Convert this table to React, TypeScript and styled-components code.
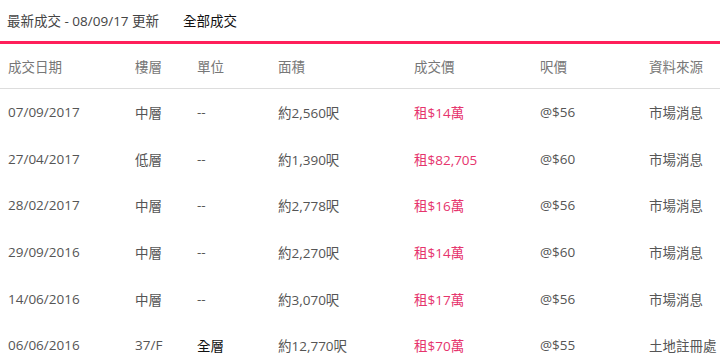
import React from "react";
import styled, { createGlobalStyle } from "styled-components";

const GlobalStyle = createGlobalStyle`
  html, body {
    margin: 0;
    padding: 0;
    background: #fff;
  }
  body {
    font-family: "Open Sans", "Noto Sans CJK TC", sans-serif;
    font-size: 13.5px;
    color: #444;
  }
`;

const Page = styled.div`
  width: 720px;
  height: 360px;
  overflow: hidden;
`;

const TabBar = styled.div`
  display: flex;
  align-items: center;
  height: 41px;
  padding-left: 7px;
  gap: 24px;
  border-bottom: 3px solid #ff1f5a;
`;

const Tab = styled.div<{ $active?: boolean }>`
  color: ${({ $active }) => ($active ? "#111" : "#444")};
  margin-top: -2px;
`;

const COLS = "127px 62px 81px 136px 126px 109px 1fr";

const HeaderRow = styled.div`
  display: grid;
  grid-template-columns: ${COLS};
  align-items: center;
  height: 44px;
  padding-left: 8px;
  border-bottom: 1px solid #ddd;
  color: #777;
`;

const Row = styled.div`
  display: grid;
  grid-template-columns: ${COLS};
  align-items: center;
  height: 46.6px;
  padding-left: 8px;
  color: #555;
`;

const Cell = styled.div<{ $tone?: "price" | "bold" }>`
  white-space: nowrap;
  color: ${({ $tone }) => ($tone === "price" ? "#e6346d" : $tone === "bold" ? "#111" : "inherit")};
`;

const headers = ["成交日期", "樓層", "單位", "面積", "成交價", "呎價", "資料來源"];

const rows = [
  ["07/09/2017", "中層", "--", "約2,560呎", "租$14萬", "@$56", "市場消息"],
  ["27/04/2017", "低層", "--", "約1,390呎", "租$82,705", "@$60", "市場消息"],
  ["28/02/2017", "中層", "--", "約2,778呎", "租$16萬", "@$56", "市場消息"],
  ["29/09/2016", "中層", "--", "約2,270呎", "租$14萬", "@$60", "市場消息"],
  ["14/06/2016", "中層", "--", "約3,070呎", "租$17萬", "@$56", "市場消息"],
  ["06/06/2016", "37/F", "全層", "約12,770呎", "租$70萬", "@$55", "土地註冊處"],
];

export default function App() {
  return (
    <Page>
      <GlobalStyle />
      <TabBar>
        <Tab>最新成交 - 08/09/17 更新</Tab>
        <Tab $active>全部成交</Tab>
      </TabBar>
      <HeaderRow>
        {headers.map((h) => (
          <Cell key={h}>{h}</Cell>
        ))}
      </HeaderRow>
      {rows.map((r, i) => (
        <Row key={i}>
          {r.map((c, j) => (
            <Cell key={j} $tone={j === 4 ? "price" : j === 2 && c !== "--" ? "bold" : undefined}>
              {c}
            </Cell>
          ))}
        </Row>
      ))}
    </Page>
  );
}
